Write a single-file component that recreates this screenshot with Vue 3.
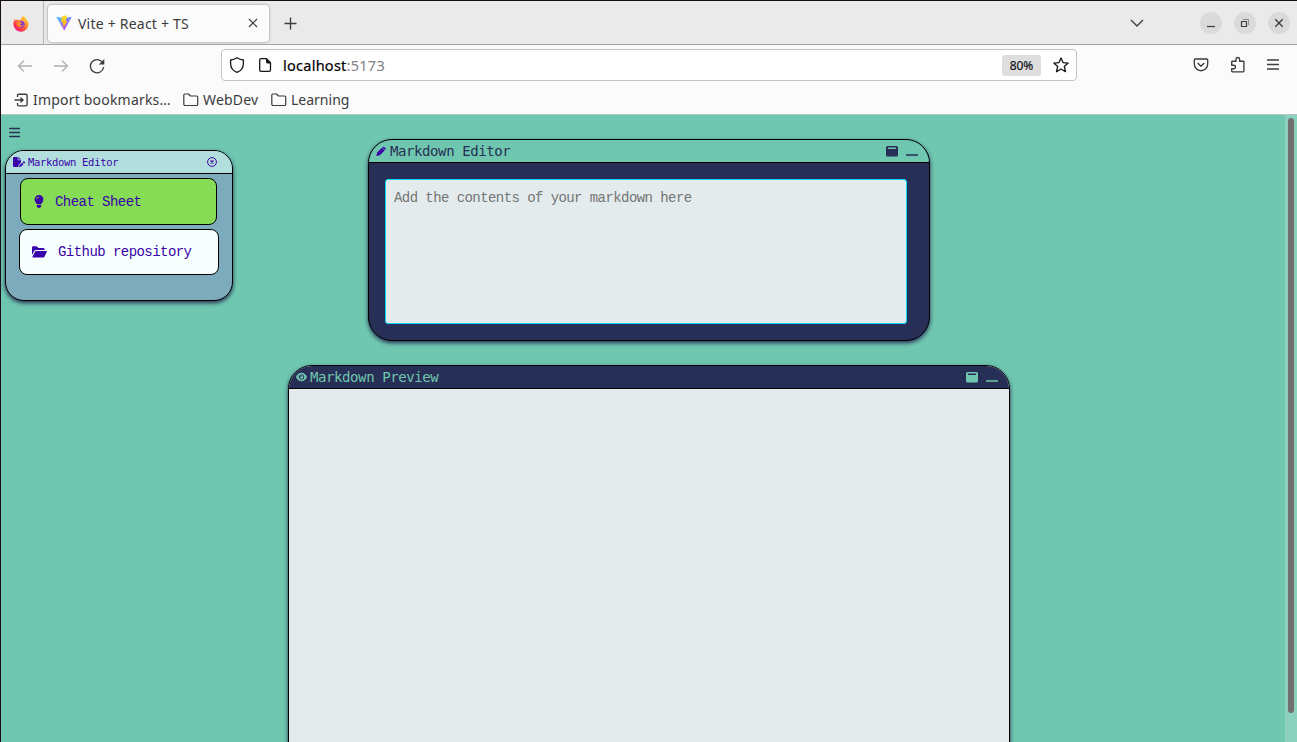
<script setup>
const folders = ['WebDev', 'Learning']
</script>

<template>
  <div class="window">
    <header class="tabbar">
      <div class="pinned">
        <svg width="16" height="16" viewBox="0 0 16 16">
          <defs>
            <linearGradient id="fox" x1="1" y1="0" x2="0.2" y2="1">
              <stop offset="0" stop-color="#fff44f" /><stop offset=".4" stop-color="#ff9a2e" /><stop offset=".75" stop-color="#ff3b47" /><stop offset="1" stop-color="#e31587" />
            </linearGradient>
          </defs>
          <path d="M10 0c2 1 3 2 3.500 3.500C15 5 15.800 7 15.500 9A7.600 7.600 0 0 1 .4 8.800C.2 6.500 1 4 2 3l.6 1.400L4.500 3.200 6 4.400l2-.8C8.200 2 9 .8 10 0z" fill="url(#fox)" />
          <circle cx="8.200" cy="8.300" r="3.400" fill="#7b36d9" />
          <path d="M4 6c1.500-.8 3-.5 4 .6l1.300.2C9 8 7.500 7.800 7 8.800c1 1.300 3 .7 4-.5-.2 3-5.500 4.200-7 .5z" fill="#ff8a2b" />
        </svg>
      </div>
      <div class="tab">
        <svg class="vite" width="16" height="16" viewBox="0 0 16 16">
          <defs>
            <linearGradient id="vg" x1="0" y1="0" x2=".6" y2="1"><stop offset="0" stop-color="#41d1ff" /><stop offset="1" stop-color="#bd34fe" /></linearGradient>
            <linearGradient id="vy" x1="0" y1="0" x2="0" y2="1"><stop offset="0" stop-color="#ffdd35" /><stop offset="1" stop-color="#ffa800" /></linearGradient>
          </defs>
          <path d="M.2 1.700L8 3l7.800-1.300L8.200 15.600z" fill="url(#vg)" />
          <path d="M11.600.2L5.600 1.400l-.5 6.200 2-.4-.6 2.600 1.200-.3-.9 4.200 4.700-7.700-2 .3z" fill="url(#vy)" />
        </svg>
        <span class="tab-title">Vite + React + TS</span>
        <svg class="tab-close" width="10" height="10" viewBox="0 0 10 10"><path d="M1 1l8 8M9 1L1 9" class="line" /></svg>
      </div>
      <svg class="plus" width="13" height="13" viewBox="0 0 13 13"><path d="M6.500 .5v12M.5 6.500h12" class="line bold" /></svg>
      <svg class="chevron" width="14" height="8" viewBox="0 0 14 8"><path d="M1 1l6 6 6-6" class="line bold" /></svg>
      <div class="controls">
        <span><svg width="22" height="22" viewBox="0 0 22 22"><path d="M7 14.500h8" class="line" /></svg></span>
        <span><svg width="22" height="22" viewBox="0 0 22 22"><path d="M9 7.500h5.500V13" fill="none" stroke="#8c8c8c" /><path d="M7.500 9.500h5v5h-5z" class="line" /></svg></span>
        <span><svg width="22" height="22" viewBox="0 0 22 22"><path d="M7.300 7.300l7.400 7.400M14.700 7.300l-7.400 7.400" class="line bold" /></svg></span>
      </div>
    </header>

    <nav class="toolbar">
      <svg class="back" width="16" height="16" viewBox="0 0 16 16"><path d="M15 8H1.500M7 2.500L1.500 8 7 13.500" class="dim" /></svg>
      <svg class="forward" width="16" height="16" viewBox="0 0 16 16"><path d="M1 8h13.500M9 2.500L14.500 8 9 13.500" class="dim" /></svg>
      <svg class="reload" width="16" height="16" viewBox="0 0 16 16"><path d="M13.800 5A6.600 6.600 0 1 0 14.600 9" class="line bold" /><path d="M15.300 1v5.500H9.800z" fill="#3b3b40" /></svg>
      <div class="url">
        <svg class="shield" width="16" height="16" viewBox="0 0 16 16"><path d="M8 .8C6.300 2 4 2.800 1.600 3v3.400c0 4 2.400 7.400 6.400 8.900 4-1.500 6.400-4.900 6.400-8.900V3C12 2.800 9.700 2 8 .8z" class="ink" /></svg>
        <svg class="page-icon" width="14" height="16" viewBox="0 0 14 16"><path d="M3 1.700h5.500l4 4V13a1.300 1.300 0 0 1-1.300 1.300H3A1.300 1.300 0 0 1 1.700 13V3A1.300 1.300 0 0 1 3 1.700z" class="ink" /><path d="M8 1.200l5.200 5.200H9.500A1.500 1.500 0 0 1 8 5z" fill="#15141a" /></svg>
        <span class="address"><b>localhost</b>:5173</span>
        <span class="zoom">80%</span>
        <svg class="star" width="16" height="16" viewBox="0 0 16 16"><path d="M8 1l2 4.600 5.200.5-3.900 3.400 1.200 5.200L8 12l-4.500 2.700 1.200-5.200L.8 6.100 6 5.600z" class="ink" /></svg>
      </div>
      <svg class="pocket" width="16" height="16" viewBox="0 0 16 16"><path d="M2.500 2h11a1.200 1.200 0 0 1 1.200 1.200V7A6.700 6.700 0 0 1 1.300 7V3.200A1.200 1.200 0 0 1 2.500 2z" class="line bold" /><path d="M4.700 6L8 9.200 11.300 6" class="line bold" /></svg>
      <svg class="puzzle" width="16" height="17" viewBox="0 0 16 17"><path d="M1.700 7.500V6A.8.8 0 0 1 2.500 5.200H6V3.300a1.800 1.800 0 0 1 3.600 0v1.900h3.500a.8.8 0 0 1 .8.8v9a.8.8 0 0 1-.8.800H2.500A.8.8 0 0 1 1.700 15v-2.300h2a1.700 1.700 0 0 0 0-3.500h-2z" class="line bold" /></svg>
      <svg class="menu" width="12" height="11" viewBox="0 0 12 11"><path d="M0 1h12M0 5.500h12M0 10h12" class="line bold" /></svg>
    </nav>

    <div class="bookmarks">
      <svg width="16" height="16" viewBox="0 0 16 16"><path d="M4.500 5V3.500A1.300 1.300 0 0 1 5.800 2.200h7a1.300 1.300 0 0 1 1.300 1.300v9a1.300 1.300 0 0 1-1.300 1.300h-7a1.300 1.300 0 0 1-1.300-1.300V11M1.500 8H9" class="line bold" /><path d="M7.500 4.700L11 8l-3.500 3.300z" fill="#3b3b40" /></svg>
      <span class="import">Import bookmarks…</span>
      <template v-for="name in folders" :key="name">
        <svg width="16" height="16" viewBox="0 0 16 16"><path d="M2 2h3.500l2 2H13.500A1.200 1.200 0 0 1 14.700 5.200V12.300A1.200 1.200 0 0 1 13.500 13.500H2A1.200 1.200 0 0 1 .8 12.300V3.200A1.200 1.200 0 0 1 2 2z" class="line" /></svg>
        <span :class="name.toLowerCase()">{{ name }}</span>
      </template>
    </div>

    <main class="page">
      <aside class="side">
        <svg class="burger" width="12" height="11" viewBox="0 0 12 11"><path d="M.8 1.500h9.600M.8 5.500h9.600M.8 9.500h9.600" stroke="#282f56" stroke-width="1.600" stroke-linecap="round" /></svg>
        <section class="card">
          <div class="card-head">
            <svg width="12" height="10" viewBox="0 0 576 512" preserveAspectRatio="none"><path d="M0 64C0 29 29 0 64 0h160v128c0 18 14 32 32 32h128v125L290 379c-8 8-13 17-16 27l-18 71c-3 12-2 24 2 35H64c-35 0-64-29-64-64zM384 128H256V0zM550 235l15 15c16 16 16 41 0 57l-29 29-72-72 29-29c16-16 41-16 57 0zM312 417l129-129 71 71-129 129c-4 4-9 7-15 9l-60 15c-12 3-22-8-19-20l15-60c1-6 4-11 8-15z" fill="#3a03aa" /></svg>
            <span class="small-title">Markdown Editor</span>
            <svg class="x-circle" width="10" height="10" viewBox="0 0 10 10"><circle cx="5" cy="5" r="4.400" fill="none" stroke="#3a03aa" /><path d="M3.500 3.500l3 3M6.500 3.500l-3 3" stroke="#3a03aa" stroke-width="1.100" /></svg>
          </div>
          <div class="btn green">
            <svg width="10" height="13" viewBox="0 0 10 13"><path d="M5 0a4.400 4.400 0 0 1 4.400 4.400C9.400 6.800 7.600 7.500 7.200 9.300H2.800C2.400 7.500.6 6.800.6 4.400A4.400 4.400 0 0 1 5 0zM2.800 10h4.400v.8A2.200 2.200 0 0 1 2.800 10.800z" fill="#3a03aa" /><path d="M2.600 4.300A2.300 2.300 0 0 1 4.900 2" fill="none" stroke="#86dc55" stroke-width=".8" /></svg>
            <span>Cheat Sheet</span>
          </div>
          <div class="btn white">
            <svg width="15" height="12" viewBox="0 0 15 12"><path d="M0 9V1.500A1.400 1.400 0 0 1 1.400.2h3.200L6.500 2h4.700a1.400 1.400 0 0 1 1.400 1.400v.7H4a2.200 2.200 0 0 0-1.900 1.100zM.4 10.900L3 5.700A1.300 1.300 0 0 1 4.200 5h10.100a.6.600 0 0 1 .5.900l-2.500 5a1.300 1.300 0 0 1-1.200.7H.8a.5.500 0 0 1-.4-.7z" fill="#3a03aa" /></svg>
            <span>Github repository</span>
          </div>
        </section>
      </aside>

      <div class="workspace">
        <section class="panel editor">
          <div class="head">
            <svg class="lead" width="10" height="11" viewBox="0 0 11 11"><path d="M6.500 1.300l3 3-5.300 5.200L.4 10.500l.8-3.900zM7.200.7A1.200 1.200 0 0 1 8.900.5l1.400 1.200a1.200 1.200 0 0 1 0 1.700l-.4.500-3-2.900z" fill="#3a03aa" /></svg>
            <span class="title">Markdown Editor</span>
            <svg class="win" width="12" height="11" viewBox="0 0 12 11"><path fill-rule="evenodd" d="M1.500 0h9A1.500 1.500 0 0 1 12 1.500v7.500A1.500 1.500 0 0 1 10.500 10.500h-9A1.500 1.500 0 0 1 0 9V1.500A1.500 1.500 0 0 1 1.500 0zM2 1.500V3h8V1.500z" fill="currentColor" /></svg>
            <svg class="mini" width="12" height="2" viewBox="0 0 12 2"><path d="M.5 1h11" stroke="currentColor" stroke-width="1.500" stroke-linecap="round" /></svg>
          </div>
          <textarea placeholder="Add the contents of your markdown here"></textarea>
        </section>
        <section class="panel preview">
          <div class="head">
            <svg class="lead" width="11" height="10" viewBox="0 0 11 10"><path d="M5.500.8C3 .8 1 2.500 0 5c1 2.500 3 4.200 5.500 4.200S10 7.500 11 5C10 2.500 8 .8 5.500.8z" fill="currentColor" /><circle cx="5.500" cy="5" r="2.300" fill="none" stroke="#282f56" stroke-width="1" /><path d="M4 5a1.500 1.500 0 0 0 1.500-1.500" fill="none" stroke="#282f56" stroke-width=".8" /></svg>
            <span class="title">Markdown Preview</span>
            <svg class="win" width="12" height="11" viewBox="0 0 12 11"><path fill-rule="evenodd" d="M1.500 0h9A1.500 1.500 0 0 1 12 1.500v7.500A1.500 1.500 0 0 1 10.500 10.500h-9A1.500 1.500 0 0 1 0 9V1.500A1.500 1.500 0 0 1 1.500 0zM2 1.500V3h8V1.500z" fill="currentColor" /></svg>
            <svg class="mini" width="12" height="2" viewBox="0 0 12 2"><path d="M.5 1h11" stroke="currentColor" stroke-width="1.500" stroke-linecap="round" /></svg>
          </div>
        </section>
      </div>
      <div class="scroll"><div class="thumb"></div></div>
    </main>
  </div>
</template>

<style>
body { overflow: hidden; }
</style>

<style scoped>
* { box-sizing: border-box; }
svg { display: block; flex: none; }
span { white-space: nowrap; }
.window { width: 1297px; height: 742px; overflow: hidden; display: flex; flex-direction: column; border: solid #180c18; border-width: 1px 0 0 1px; background: #fbfbfb; font-family: "Noto Sans", sans-serif; font-size: 14px; color: #3b3b40; }
.line { fill: none; stroke: #3b3b40; stroke-width: 1.200; stroke-linejoin: round; }
.line.bold { stroke-width: 1.350; }
.dim { fill: none; stroke: #b0b0b2; stroke-width: 1.300; }
.ink { fill: none; stroke: #15141a; stroke-width: 1.300; stroke-linejoin: round; }

.tabbar { flex: none; height: 44px; display: flex; align-items: center; background: #eaeaea; border-bottom: 1px solid #a5a5a5; }
.pinned { width: 43px; height: 43px; display: flex; align-items: center; padding-left: 12px; border-right: 1px solid #b5b5b5; padding-top: 2px; }
.tab { width: 221px; height: 37px; margin: 1px 0 0 4px; display: flex; align-items: center; padding: 0 11px 0 8px; background: #fbfbfb; border-radius: 4px; box-shadow: 0 0 3px rgba(0,0,0,.4); }
.tab-title { margin-left: 6px; letter-spacing: .220px; }
.tab-close { margin: 0 0 1px auto; }
.plus { margin: 2px 0 0 15px; }
.chevron { margin: 0 0 0 auto; }
.controls { display: flex; gap: 12px; margin: 1px 7px 0 56px; }
.controls span { width: 22px; height: 22px; border-radius: 50%; background: #dadada; }

.toolbar { flex: none; height: 41px; display: flex; align-items: center; padding: 0 18px 0 16px; }
.forward { margin-left: 20px; }
.reload { margin-left: 20px; }
.url { width: 856px; height: 32px; margin: 0 0 1px 116px; display: flex; align-items: center; padding: 0 7px; background: #fff; border: 1px solid #c3c3c3; border-radius: 4px; }
.page-icon { margin-left: 13px; }
.address { margin-left: 11px; color: #808085; font-size: 14.500px; letter-spacing: .260px; }
.address b { font-weight: 400; color: #000; -webkit-text-stroke: .2px #000; }
.zoom { width: 39px; height: 21px; margin-left: auto; background: #dedede; border-radius: 3px; color: #15141a; font-size: 12px; line-height: 21px; text-align: center; -webkit-text-stroke: .2px #15141a; }
.star { margin-left: 12px; }
.pocket { margin-left: 116px; margin-bottom: 1px; }
.puzzle { margin-left: 21px; margin-bottom: 2px; }
.menu { margin-left: auto; margin-bottom: 2px; }

.bookmarks { flex: none; height: 29px; display: flex; align-items: center; padding: 0 0 1px 12px; border-bottom: 1px solid #b8c4c0; font-size: 14px; }
.bookmarks span { margin-left: 4px; }
.bookmarks .import { width: 138px; margin-right: 12px; letter-spacing: .200px; }
.bookmarks .webdev { width: 56px; margin-right: 12px; letter-spacing: .2px; }
.bookmarks .learning { margin-left: 4px; }

.page { flex: 1; min-height: 0; display: flex; background: #6fc7af; }
.side { flex: none; width: 232px; padding: 12px 0 0 4px; }
.burger { margin-left: 4px; }
.card { width: 228px; height: 151px; margin-top: 12px; border: 1px solid #000; border-radius: 19px; background: #7eabbb; overflow: hidden; box-shadow: 0 2px 4px #282f56; display: flex; flex-direction: column; }
.card-head { flex: none; height: 23px; display: flex; align-items: center; padding: 0 15px 0 7px; background: #b2dfdd; border-bottom: 1px solid #000; }
.small-title { margin-left: 3px; font: 10.500px "DejaVu Sans Mono", monospace; letter-spacing: -.310px; color: #3a03aa; }
.x-circle { margin-left: auto; }
.btn { flex: none; display: flex; align-items: center; border: 1px solid #000; border-radius: 8px; color: #3a03aa; font: 14px "Liberation Mono", monospace; }
.green { width: 197px; height: 47px; margin: 4px 0 0 14px; padding-left: 13px; background: #86dc55; letter-spacing: -.550px; }
.green span { margin-left: 11px; }
.white { width: 200px; height: 46px; margin: 4px 0 0 13px; padding-left: 12px; background: #f6fffd; letter-spacing: -.550px; }
.white span { margin-left: 11px; }

.workspace { flex: 1; display: flex; flex-direction: column; align-items: center; padding: 24px 152px 0 0; gap: 24px; margin-left: -68px; }
.panel { flex: none; border: 1px solid #000; border-radius: 24px; overflow: hidden; box-shadow: 0 2px 4px #282f56; display: flex; flex-direction: column; }
.head { flex: none; height: 23px; display: flex; align-items: center; padding: 0 11px 0 7px; border-bottom: 1px solid #000; }
.title { margin-left: 3px; font: 14px "DejaVu Sans Mono", monospace; letter-spacing: -.410px; }
.editor .title { margin-left: 4px; }
.win { margin-left: auto; }
.mini { margin: 8px 0 0 8px; }
.editor { width: 562px; height: 202px; background: #282f56; }
.editor .head { background: #6fc7af; color: #282f56; }
textarea { display: block; width: 522px; height: 145px; margin: 16px 0 0 16px; padding: 10px 8px; border: 1px solid #00d9f9; border-radius: 3px; outline: none; resize: none; background: #e3ebec; font: 14px "Liberation Mono", monospace; letter-spacing: -.570px; }
textarea::placeholder { color: #757575; opacity: 1; }
.preview { width: 722px; height: 480px; background: #e3ebec; }
.preview .head { background: #282f56; color: #6fc7af; }
.scroll { flex: none; width: 12px; padding: 3px 3px 0; background: #8bd1be; }
.thumb { width: 6px; height: 595px; border-radius: 3px; background: #707070; }
</style>
